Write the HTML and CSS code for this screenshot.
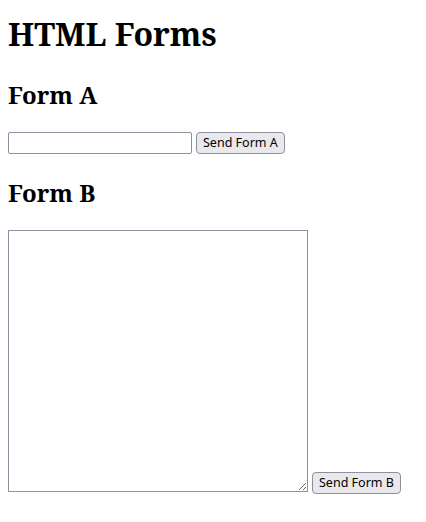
FILE: index.html
```
<!DOCTYPE html>
<html>
<head>
<meta charset="utf-8">
<title>HTML Forms</title>
<link rel="stylesheet" href="styles.css">
</head>
<body class="page">
<h1 class="title">HTML Forms</h1>
<h2 class="section">Form A</h2>
<form class="form-row form-a">
<input class="field" type="text">
<button class="btn" type="button">Send Form A</button>
</form>
<h2 class="section">Form B</h2>
<form class="form-row form-b">
<textarea class="area"></textarea>
<button class="btn btn-b" type="button">Send Form B</button>
</form>
</body>
</html>
```
FILE: styles.css
```
html, body { background: #fff; color: #000; }
.page {
  font-family: "Noto Serif", "Droid Serif", "DejaVu Serif", serif;
  margin: 0;
  padding: 0 8px 8px;
}
.title { font-size: 32px; margin: 11.5px 0 23px; font-weight: bold; }
.section { font-size: 24px; margin: 22px 0 21px; font-weight: bold; }
.form-row {
  display: flex;
  align-items: flex-end;
  gap: 4px;
  margin: 0;
}
.field {
  width: 184px;
  height: 22px;
  box-sizing: border-box;
  border: 1px solid #8f8f9d;
  border-radius: 2px;
  padding: 2px 4px;
  margin: 0;
  background: #fff;
  font: 13.33px "Noto Sans", sans-serif;
}
.btn {
  height: 22px;
  box-sizing: border-box;
  border: 1px solid #8f8f9d;
  border-radius: 4px;
  background: #e9e9ed;
  color: #000;
  padding: 0 6px;
  margin: 0;
  font: 12.5px "Noto Sans", sans-serif;
  line-height: 20px;
}
.area {
  width: 300px;
  height: 262px;
  box-sizing: border-box;
  border: 1px solid #8f8f9d;
  border-radius: 0;
  padding: 2px;
  margin: 0;
  background: #fff;
  font: 13.33px "DejaVu Sans Mono", monospace;
}
.btn-b { margin-bottom: -2px; }
```
